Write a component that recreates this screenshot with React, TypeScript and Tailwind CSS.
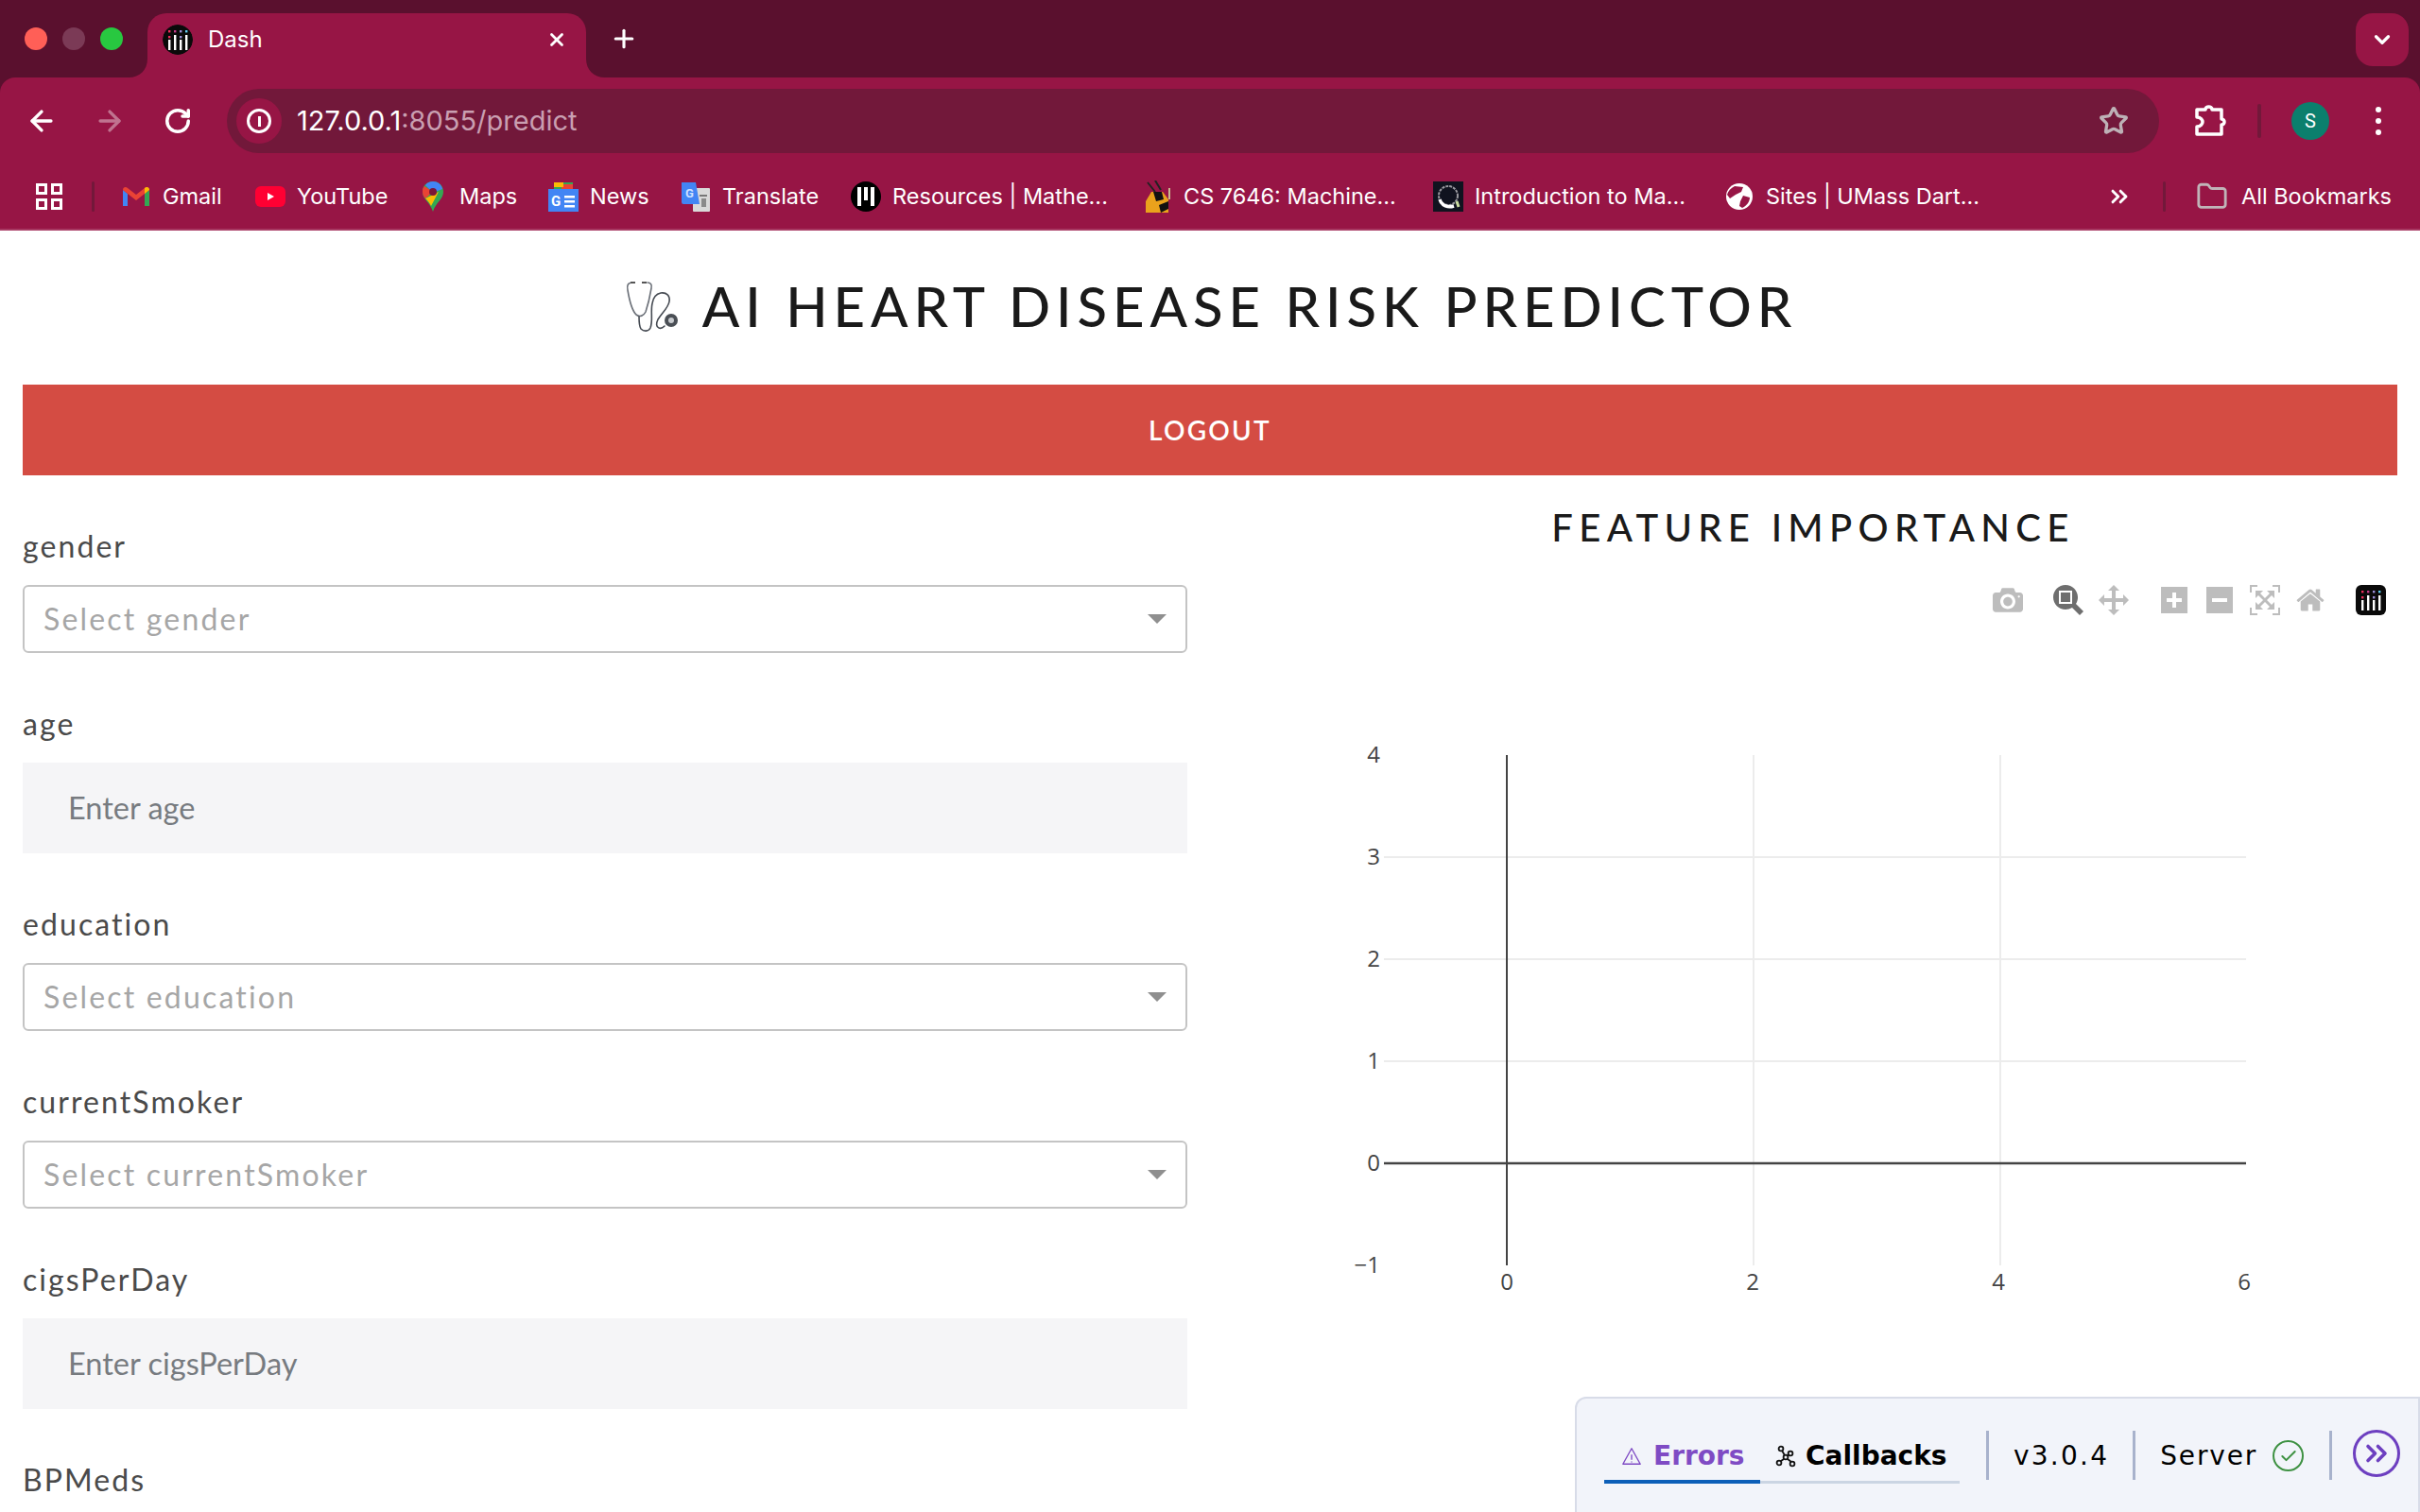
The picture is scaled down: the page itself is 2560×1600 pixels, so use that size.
import React from "react";
import { ArrowLeft, ArrowRight, RotateCw, Plus, X, ChevronDown, Star, ChevronsRight, Folder, Check } from "lucide-react";

const DashLogo = ({ size = 32, r = 6 }: { size?: number; r?: number }) => (
  <svg width={size} height={size} viewBox="0 0 32 32" className="shrink-0">
    <rect width="32" height="32" rx={r} fill="#0a0a0a" />
    <g fill="#ef2f5c"><rect x="6" y="6" width="2.4" height="2.4" /><rect x="6" y="12" width="2.4" height="2.4" /></g>
    <rect x="12" y="6" width="2.4" height="2.4" fill="#c23a88" />
    <rect x="18" y="6" width="2.4" height="2.4" fill="#9b8ed8" />
    <rect x="18" y="12" width="2.4" height="2.4" fill="#9b8ed8" />
    <rect x="24" y="6" width="2.4" height="2.4" fill="#5fcdf0" />
    <g fill="#fff">
      <rect x="6" y="16" width="2.4" height="11" />
      <rect x="12" y="11" width="2.4" height="16" />
      <rect x="18" y="16" width="2.4" height="11" />
      <rect x="24" y="11" width="2.4" height="16" />
    </g>
  </svg>
);

const Gmail = () => (
  <svg width="30" height="24" viewBox="0 0 30 24">
    <path d="M1 22V5l5 4v13z" fill="#4285f4" />
    <path d="M29 22V5l-5 4v13z" fill="#34a853" />
    <path d="M1 5c0-3 3-4 5-2l9 7 9-7c2-2 5-1 5 2l-5 4-9 7-9-7z" fill="#ea4335" />
    <path d="M24 3c2-2 5-1 5 2l-5 4z" fill="#fbbc04" />
  </svg>
);
const Youtube = () => (
  <svg width="32" height="24" viewBox="0 0 32 24">
    <rect y="1" width="32" height="22" rx="6" fill="#ff0033" />
    <path d="M13 8v8l7-4z" fill="#fff" />
  </svg>
);
const Maps = () => (
  <svg width="24" height="32" viewBox="0 0 24 32">
    <path d="M12 0C5 0 1 5 1 11c0 8 8 11 11 21 3-10 11-13 11-21C23 5 19 0 12 0z" fill="#34a853" />
    <path d="M12 0C9 0 6 1 4 4l8 8 10-4c-1-5-5-8-10-8z" fill="#4285f4" />
    <path d="M3 5C1 7 1 9 1 11c0 3 1 5 3 7l8-7z" fill="#ea4335" />
    <path d="M4 18c2 2 4 4 6 8l8-15z" fill="#fbbc04" />
    <circle cx="12" cy="11" r="4" fill="#7b1638" />
  </svg>
);
const News = () => (
  <svg width="32" height="32" viewBox="0 0 32 32">
    <rect x="6" y="1" width="20" height="10" fill="#34a853" />
    <rect x="14" y="3" width="12" height="8" fill="#ea4335" />
    <rect x="6" y="1" width="10" height="5" fill="#fbbc04" />
    <rect y="8" width="32" height="24" fill="#4285f4" />
    <text x="3" y="26" fontSize="15" fontWeight="700" fill="#fff" fontFamily="Roboto, sans-serif">G</text>
    <rect x="17" y="15" width="11" height="2.5" fill="#fff" />
    <rect x="17" y="20" width="11" height="2.5" fill="#fff" />
    <rect x="17" y="25" width="11" height="2.5" fill="#fff" />
  </svg>
);
const Translate = () => (
  <svg width="30" height="32" viewBox="0 0 30 32">
    <rect x="12" y="7" width="18" height="25" rx="1" fill="#d9d9d9" />
    <rect x="19" y="14" width="8" height="2" fill="#777" />
    <rect x="21" y="18" width="5" height="9" fill="#8a8a8a" />
    <path d="M0 1h15l4 23H2a2 2 0 0 1-2-2z" fill="#4285f4" />
    <text x="4" y="17" fontSize="13" fontWeight="700" fill="#cfe0ff" fontFamily="Roboto, sans-serif">G</text>
  </svg>
);
const Resources = () => (
  <svg width="32" height="32" viewBox="0 0 32 32">
    <circle cx="16" cy="16" r="16" fill="#000" />
    <rect x="7" y="6" width="4" height="20" fill="#fff" />
    <rect x="14" y="6" width="4" height="14" fill="#fff" />
    <rect x="21" y="6" width="4" height="20" fill="#fff" />
  </svg>
);
const Bee = () => (
  <svg width="32" height="34" viewBox="0 0 32 34">
    <path d="M6 2l8 10M14 0l6 10" stroke="#222" strokeWidth="2" />
    <path d="M4 22l6-10h12l6 8v14H4z" fill="#eaa21c" />
    <path d="M12 12h9l2 8-8 2zM18 26l10-4v8l-8 4z" fill="#111" />
    <path d="M29 8v12" stroke="#c9b98f" strokeWidth="2" />
  </svg>
);
const Intro = () => (
  <svg width="32" height="32" viewBox="0 0 32 32">
    <rect width="32" height="32" fill="#10131f" />
    <circle cx="16" cy="15" r="10" fill="none" stroke="#9a9aa0" strokeWidth="2" strokeDasharray="3 1" />
    <path d="M7 19c2 7 9 9 15 7" fill="none" stroke="#fff" strokeWidth="3.5" />
    <path d="M25 21l2 6" stroke="#c9dca0" strokeWidth="3" />
  </svg>
);
const Globe = () => (
  <svg width="28" height="28" viewBox="0 0 28 28">
    <circle cx="14" cy="14" r="14" fill="#fff" />
    <path d="M9 3l9 1-2 5-6 3-6 4-3-4c1-4 4-7 8-9zM18 13l7 2c0 5-4 9-8 11l-3-2 1-5z" fill="#971545" />
  </svg>
);

const bookmarks: [React.ReactNode, string, string][] = [
  [<Gmail />, "Gmail", "w-[142px]"],
  [<Youtube />, "YouTube", "w-[172px]"],
  [<Maps />, "Maps", "w-[138px]"],
  [<News />, "News", "w-[140px]"],
  [<Translate />, "Translate", "w-[180px]"],
  [<Resources />, "Resources | Mathe...", "w-[308px]"],
  [<Bee />, "CS 7646: Machine...", "w-[308px]"],
  [<Intro />, "Introduction to Ma...", "w-[308px]"],
  [<Globe />, "Sites | UMass Dart...", "w-[308px]"],
];

const Label = ({ children }: { children: React.ReactNode }) => (
  <div className="h-[44px] mb-[19px] flex items-center text-[32px] tracking-[0.065em] text-[#4a4a4a]">{children}</div>
);

const SelectField = ({ name }: { name: string }) => (
  <div>
    <Label>{name}</Label>
    <div className="h-[72px] rounded-md border-2 border-[#c4c4c4] flex items-center justify-between pl-[20px] pr-[20px] bg-white">
      <span className="text-[32px] tracking-[0.068em] text-[#a6a6a6]">Select {name}</span>
      <span className="w-0 h-0 border-x-[10px] border-x-transparent border-t-[10px] border-t-[#8f8f8f]" />
    </div>
  </div>
);

const InputField = ({ name }: { name: string }) => (
  <div>
    <Label>{name}</Label>
    <div className="h-[96px] bg-[#f5f5f7] flex items-center pl-[48px] text-[32.5px] text-[#777b80]">Enter {name}</div>
  </div>
);

const ModeIcon = ({ d, w = 1000, fill = "#bdbdbd" }: { d: string; w?: number; fill?: string }) => (
  <svg width="32" height="32" viewBox={`0 0 ${w} 1000`} className="shrink-0">
    <path d={d} fill={fill} transform="matrix(1 0 0 -1 0 850)" />
  </svg>
);

const Chart = () => {
  const xs = [1594, 1854, 2114, 2374];
  const ys = [798, 906, 1014, 1122, 1230, 1338];
  const yl = ["4", "3", "2", "1", "0", "\u22121"];
  return (
    <svg viewBox="1300 760 1236 640" width="1236" height="640" className="block">
      <g stroke="#ececec" strokeWidth="2">
        {[1855, 2116].map((x) => <line key={x} x1={x} x2={x} y1="798" y2="1338" />)}
        {[906, 1014, 1122].map((y) => <line key={y} x1="1464" x2="2376" y1={y} y2={y} />)}
      </g>
      <line x1="1594" x2="1594" y1="798" y2="1338" stroke="#444" strokeWidth="2" />
      <line x1="1464" x2="2376" y1="1230" y2="1230" stroke="#444" strokeWidth="2.5" />
      <g fontFamily="'Open Sans', sans-serif" fontSize="24" fill="#444">
        {ys.map((y, i) => <text key={y} x="1460" y={y + 8} textAnchor="end">{yl[i]}</text>)}
        {xs.map((x, i) => <text key={x} x={x} y="1364" textAnchor="middle">{i * 2}</text>)}
      </g>
    </svg>
  );
};

const Stethoscope = () => (
  <svg width="62" height="60" viewBox="657 293 62 60" className="shrink-0">
    <g fill="none" strokeLinecap="round">
      <path d="M667 298c-5 0-6 3-5 8 2 12 5 22 9 26 4 3 8 1 10-3 3-9 5-19 6-25 1-4-1-6-4-6" stroke="#6b7078" strokeWidth="1.6" />
      <path d="M674 334c0 6 0 10 2 13 3 3 8 3 10-1 3-8 0-17 2-26 1-6 4-10 9-11 6-1 10 3 9 9-1 7-8 12-12 19-2 4-2 8 1 9 2 1 4 0 6-2" stroke="#454a52" strokeWidth="1.6" />
    </g>
    <path d="M665 298h5M677 298h5" stroke="#555" strokeWidth="2" />
    <circle cx="708" cy="338" r="7" fill="#4a4f55" />
    <circle cx="708" cy="338" r="3" fill="#c9ccd0" />
  </svg>
);

export default function App() {
  return (
    <div className="relative w-[2560px] h-[1600px] overflow-hidden bg-white font-['Lato',sans-serif]">
      <div className="bg-[#5a102e] h-[244px] font-['Inter',sans-serif]">
        {/* tab strip */}
        <div className="h-[82px] flex items-start pt-[14px] pl-[26px]">
          <div className="flex gap-[16px] h-[54px] items-center">
            <span className="w-[24px] h-[24px] rounded-full bg-[#ff5f57]" />
            <span className="w-[24px] h-[24px] rounded-full bg-[#7b3a56]" />
            <span className="w-[24px] h-[24px] rounded-full bg-[#28c840]" />
          </div>
          <div className="relative ml-[26px] w-[464px] h-[68px] bg-[#971545] rounded-t-[20px] flex items-center pl-[16px] pr-[20px] pb-[12px] text-white">
            <svg width="20" height="20" viewBox="0 0 20 20" className="absolute -left-[20px] bottom-0"><path d="M20 0v20H0c12 0 20-8 20-20z" fill="#971545" /></svg>
            <svg width="20" height="20" viewBox="0 0 20 20" className="absolute -right-[20px] bottom-0"><path d="M0 0v20h20C8 20 0 12 0 0z" fill="#971545" /></svg>
            <span className="w-[32px] h-[32px] rounded-full overflow-hidden shrink-0"><DashLogo r={16} /></span>
            <span className="ml-[16px] text-[24px] flex-1">Dash</span>
            <X size={22} strokeWidth={3} />
          </div>
          <div className="ml-[25px] h-[54px] flex items-center text-white"><Plus size={30} strokeWidth={2.5} /></div>
          <div className="ml-auto mr-[12px] w-[56px] h-[56px] rounded-[18px] bg-[#971545] flex items-center justify-center text-white">
            <ChevronDown size={26} strokeWidth={3} />
          </div>
        </div>
        {/* toolbar */}
        <div className="h-[162px] bg-[#971545] rounded-t-[16px] border-b-2 border-b-[#a83a63] text-white pt-[12px]">
          <div className="h-[68px] flex items-center">
            <div className="w-[240px] flex items-center gap-[32px] pl-[24px] shrink-0">
              <span className="w-[40px] flex justify-center"><ArrowLeft size={34} strokeWidth={2.4} /></span>
              <span className="w-[40px] flex justify-center"><ArrowRight size={34} strokeWidth={2.4} className="opacity-40" /></span>
              <span className="w-[40px] flex justify-center"><RotateCw size={30} strokeWidth={2.8} /></span>
            </div>
            <div className="w-[2044px] h-[68px] bg-[#72183a] rounded-full flex items-center pl-[10px] pr-[32px] shrink-0">
              <span className="w-[48px] h-[48px] rounded-full bg-[#971545] flex items-center justify-center">
                <span className="w-[26px] h-[26px] rounded-full border-[3px] border-white flex items-center justify-center">
                  <span className="w-[3px] h-[11px] bg-white" />
                </span>
              </span>
              <span className="ml-[16px] text-[29px]">127.0.0.1<span className="text-[#c99fb1]">:8055/predict</span></span>
              <Star size={32} strokeWidth={2.5} className="ml-auto text-[#bdb1b6]" />
            </div>
            <svg width="36" height="36" viewBox="0 0 36 36" fill="none" stroke="#fff" strokeWidth="3.5" strokeLinejoin="round" className="ml-[36px] shrink-0">
              <path d="M4 6h9c0-4 7-4 7 0h10v10c4 0 4 6 0 6v10H4v-8c4 0 6-3 6-5s-2-5-6-5z" />
            </svg>
            <span className="ml-[32px] w-[4px] h-[36px] rounded bg-[#72183a]" />
            <span className="ml-[32px] w-[40px] h-[40px] rounded-full bg-[#0b7f6d] flex items-center justify-center text-[20px] font-['Roboto',sans-serif]">S</span>
            <span className="ml-[49px] flex flex-col gap-[6px]">
              <span className="w-[6px] h-[6px] rounded-full bg-white" />
              <span className="w-[6px] h-[6px] rounded-full bg-white" />
              <span className="w-[6px] h-[6px] rounded-full bg-white" />
            </span>
          </div>
          <div className="h-[32px] mt-[30px] flex items-center text-[23.5px] pl-[38px]">
            <span className="grid grid-cols-2 gap-[4px] w-[28px] h-[28px] shrink-0">
              <span className="border-[3px] border-white" /><span className="border-[3px] border-white" />
              <span className="border-[3px] border-white" /><span className="border-[3px] border-white" />
            </span>
            <span className="ml-[31px] w-[3px] h-[32px] rounded bg-[#72183a] shrink-0" />
            <div className="ml-[28px] flex items-center whitespace-nowrap">
              {bookmarks.map(([icon, text, width]) => (
                <div key={text} className={`flex items-center gap-[12px] ${width}`}>
                  <span className="w-[32px] h-[32px] flex items-center justify-center">{icon}</span>
                  <span>{text}</span>
                </div>
              ))}
            </div>
            <ChevronsRight size={28} strokeWidth={2.5} className="ml-auto mr-[32px]" />
            <span className="w-[3px] h-[32px] rounded bg-[#72183a] shrink-0 mr-[32px]" />
            <Folder size={34} strokeWidth={2} className="text-[#c0b4b8] mr-[14px]" />
            <span className="mr-[30px]">All Bookmarks</span>
          </div>
        </div>
      </div>

      {/* page */}
      <div className="px-[24px]">
        <div className="h-[163px] flex items-center justify-center gap-[22px] pb-[4px]">
          <Stethoscope />
          <h1 className="text-[58px] leading-none font-medium tracking-[0.103em] text-[#1a1a1a]">AI HEART DISEASE RISK PREDICTOR</h1>
        </div>
        <div className="h-[96px] bg-[#d44c43] flex items-center justify-center text-white text-[28px] font-semibold tracking-[0.08em]">LOGOUT</div>
        <div className="flex">
          <div className="w-[1232px] shrink-0 pt-[53px] flex flex-col gap-[53px]">
            <SelectField name="gender" />
            <InputField name="age" />
            <SelectField name="education" />
            <SelectField name="currentSmoker" />
            <InputField name="cigsPerDay" />
            <div>
              <Label>BPMeds</Label>
            </div>
          </div>
          <div className="ml-[44px] w-[1236px] shrink-0">
            <div className="h-[64px] mt-[23px] flex items-center justify-center text-[40px] font-medium tracking-[0.158em] text-[#1a1a1a]">FEATURE IMPORTANCE</div>
            <div className="mt-[29px] flex justify-end gap-[32px] pr-[12px] h-[32px]">
              <div className="flex gap-[16px]">
                <ModeIcon d="m500 450c-83 0-150-67-150-150 0-83 67-150 150-150 83 0 150 67 150 150 0 83-67 150-150 150z m400 150h-120c-16 0-34 13-39 29l-31 93c-6 15-23 28-40 28h-340c-16 0-34-13-39-28l-31-94c-6-15-23-28-40-28h-120c-55 0-100-45-100-100v-450c0-55 45-100 100-100h800c55 0 100 45 100 100v450c0 55-45 100-100 100z m-400-550c-138 0-250 112-250 250 0 138 112 250 250 250 138 0 250-112 250-250 0-138-112-250-250-250z m365 380c-19 0-35 16-35 35 0 19 16 35 35 35 19 0 35-16 35-35 0-19-16-35-35-35z" />
              </div>
              <div className="flex gap-[16px]">
                <ModeIcon fill="#6e6e6e" d="m1000-25l-250 251c40 63 63 138 63 218 0 224-182 406-407 406-224 0-406-182-406-406s183-406 407-406c80 0 155 22 218 62l250-250 125 125z m-812 250l0 438 437 0 0-438-437 0z m62 375l313 0 0-312-313 0 0 312z" />
                <ModeIcon d="m1000 350l-187 188 0-125-250 0 0 250 125 0-188 187-187-187 125 0 0-250-250 0 0 125-188-188 186-187 0 125 252 0 0-250-125 0 187-188 188 188-125 0 0 250 250 0 0-126 187 188z" />
              </div>
              <div className="flex gap-[16px]">
                <ModeIcon w={875} d="m1 787l0-875 875 0 0 875-875 0z m687-500l-187 0 0-187-125 0 0 187-188 0 0 125 188 0 0 187 125 0 0-187 187 0 0-125z" />
                <ModeIcon w={875} d="m0 788l0-876 875 0 0 876-875 0z m688-500l-500 0 0 125 500 0 0-125z" />
                <ModeIcon d="m250 850l-187 0-63 0 0-62 0-188 63 0 0 188 187 0 0 62z m688 0l-188 0 0-62 188 0 0-188 62 0 0 188 0 62-62 0z m-875-938l0 188-63 0 0-188 0-62 63 0 187 0 0 62-187 0z m875 188l0-188-188 0 0-62 188 0 62 0 0 62 0 188-62 0z m-125 188l-1 0-93-94-156 156 156 156 92-93 2 0 0 250-250 0 0-2 93-92-156-156-156 156 94 92 0 2-250 0 0-250 0 0 93 93 157-156-157-156-93 94 0 0 0-250 250 0 0 0-94 93 156 157 156-157-93-93 0 0 250 0 0 250z" />
                <ModeIcon w={928.6} d="m786 296v-267q0-15-11-26t-25-10h-214v214h-143v-214h-214q-15 0-25 10t-11 26v267q0 1 0 2t0 2l321 264 321-264q1-1 1-4z m124 39l-34-41q-5-5-12-6h-2q-7 0-12 3l-386 322-386-322q-7-4-13-4-7 2-12 7l-35 41q-4 5-3 13t6 12l401 334q18 15 42 15t43-15l136-114v109q0 8 5 13t13 5h107q8 0 13-5t5-13v-227l122-102q5-5 6-12t-4-13z" />
              </div>
              <DashLogo />
            </div>
            <div className="mt-[110px]"><Chart /></div>
          </div>
        </div>
      </div>

      {/* dash debug menu */}
      <div className="absolute right-0 top-[1478px] w-[894px] h-[140px] rounded-tl-[12px] border-2 border-[#d8dce8] bg-[#f2f4fa] font-['DejaVu_Sans',sans-serif] text-[28px] flex items-start pl-[29px] pt-[34px]">
        <div className="flex h-[56px] border-b-[3px] border-b-[#cbd5e3] items-center w-[376px] relative">
          <div className="w-[165px] h-full flex items-center gap-[12px] pl-[18px] text-[#7f4bc4] font-bold relative">
            <svg width="22" height="22" viewBox="0 0 24 24" fill="none" stroke="#7f4bc4" strokeWidth="1.5" strokeLinejoin="round" className="shrink-0"><path d="M12 3L2 21h20zM12 10v6M12 18v1" /></svg>
            <span>Errors</span>
            <span className="absolute left-0 right-0 -bottom-[3px] h-[4px] bg-[#0d5fb8]" />
          </div>
          <div className="flex items-center gap-[10px] pl-[16px] text-black font-bold">
            <svg width="22" height="24" viewBox="0 0 22 24" fill="none" stroke="#111" strokeWidth="1.8" className="shrink-0">
              <circle cx="6" cy="4" r="2.4" /><circle cx="16" cy="9" r="2.4" /><circle cx="11" cy="13" r="2.4" /><circle cx="4" cy="19" r="2.4" /><circle cx="18" cy="20" r="2.4" />
              <path d="M7 6l3 5M13 11l2-1M9 15l-3 2M13 15l4 3" />
            </svg>
            <span>Callbacks</span>
          </div>
        </div>
        <span className="ml-[28px] w-[3px] h-[52px] bg-[#a8b2cc]" />
        <span className="ml-[26px] h-[54px] flex items-center tracking-[0.08em]">v3.0.4</span>
        <span className="ml-[25px] w-[3px] h-[52px] bg-[#a8b2cc]" />
        <span className="ml-[26px] h-[54px] flex items-center tracking-[0.065em]">Server</span>
        <span className="ml-[16px] mt-[10px] w-[33px] h-[33px] rounded-full border-[2.5px] border-[#3e9142] flex items-center justify-center text-[#3e9142]"><Check size={20} strokeWidth={2.4} /></span>
        <span className="ml-[27px] w-[3px] h-[52px] bg-[#a8b2cc]" />
        <span className="ml-[22px] w-[50px] h-[50px] -mt-[1px] rounded-full border-[3px] border-[#6d3fc0] flex items-center justify-center text-[#6d3fc0]"><ChevronsRight size={36} strokeWidth={2.4} /></span>
      </div>
    </div>
  );
}
